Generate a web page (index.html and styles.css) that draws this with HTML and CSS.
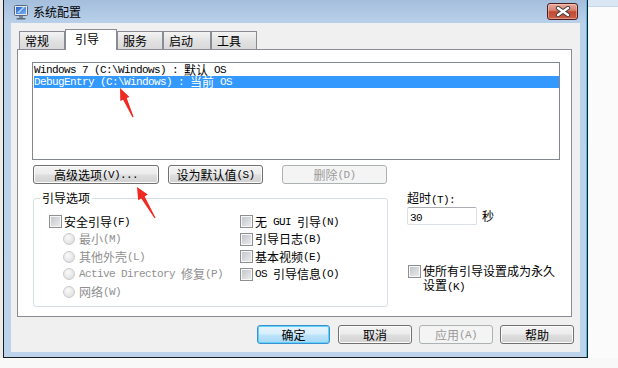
FILE: index.html
```html
<!DOCTYPE html>
<html lang="zh-CN">
<head>
<meta charset="utf-8">
<title>系统配置</title>
<link rel="stylesheet" href="styles.css">
</head>
<body>
<div class="desk">
  <div class="desk-left"></div>
  <div class="window">
    <div class="titlebar">
      <svg class="app-icon" width="14" height="15" viewBox="0 0 14 15">
        <defs>
          <linearGradient id="scr" x1="0" y1="0" x2="1" y2="1">
            <stop offset="0" stop-color="#2a62c6"/>
            <stop offset="1" stop-color="#74b2f2"/>
          </linearGradient>
        </defs>
        <rect x="0.5" y="0.5" width="13" height="10" rx="1" fill="#e4e8ee" stroke="#56677e"/>
        <rect x="2" y="2" width="10" height="7" fill="url(#scr)"/>
        <path d="M3 8 L9 2 L11 2 L5 8 Z" fill="#cfe8ff" opacity="0.8"/>
        <rect x="5" y="11" width="4" height="2" fill="#7d8794"/>
        <rect x="2.5" y="13" width="9" height="1.6" rx="0.5" fill="#5f6a78"/>
      </svg>
      <span class="title">系统配置</span>
      <div class="close">
        <svg width="16" height="11" viewBox="0 0 16 11">
          <path d="M3 2 L13 9 M13 2 L3 9" stroke="#3b3b3b" stroke-width="4.2" stroke-linecap="round"/>
          <path d="M3 2 L13 9 M13 2 L3 9" stroke="#ffffff" stroke-width="2.4" stroke-linecap="round"/>
        </svg>
      </div>
    </div>
    <div class="client">
      <div class="tabs">
        <div class="tab">常规</div>
        <div class="tab active">引导</div>
        <div class="tab">服务</div>
        <div class="tab wide">启动</div>
        <div class="tab">工具</div>
      </div>
      <div class="panel">
        <div class="listbox">
          <div class="item"><span class="a">Windows 7 (C:\Windows) : </span><span class="cj">默认</span><span class="a"> OS</span></div>
          <div class="item sel"><span class="a">DebugEntry (C:\Windows) : </span><span class="cj">当前</span><span class="a"> OS</span></div>
        </div>
        <div class="btnrow">
          <div class="btn b-adv">高级选项<span class="a">(V)...</span></div>
          <div class="btn b-def">设为默认值<span class="a">(S)</span></div>
          <div class="btn b-del disabled">删除<span class="a">(D)</span></div>
        </div>
        <div class="lower">
          <div class="group">
            <span class="group-label">引导选项</span>
            <div class="gcol1">
              <div class="row"><span class="cb"></span>安全引导<span class="a">(F)</span></div>
              <div class="row ind dis"><span class="radio"></span>最小<span class="a">(M)</span></div>
              <div class="row ind dis"><span class="radio"></span>其他外壳<span class="a">(L)</span></div>
              <div class="row ind dis"><span class="radio"></span><span class="a">Active Directory </span>修复<span class="a">(P)</span></div>
              <div class="row ind dis"><span class="radio"></span>网络<span class="a">(W)</span></div>
            </div>
            <div class="gcol2">
              <div class="row"><span class="cb"></span>无<span class="a"> GUI </span>引导<span class="a">(N)</span></div>
              <div class="row"><span class="cb"></span>引导日志<span class="a">(B)</span></div>
              <div class="row"><span class="cb"></span>基本视频<span class="a">(E)</span></div>
              <div class="row"><span class="cb"></span><span class="a">OS </span>引导信息<span class="a">(O)</span></div>
            </div>
          </div>
          <div class="side">
            <div class="side-label">超时<span class="a">(T):</span></div>
            <div class="timeout">
              <div class="input"><span class="a">30</span></div>
              <span class="unit">秒</span>
            </div>
            <div class="perm">
              <span class="cb"></span>
              <div class="perm-text">
                <span class="pline">使所有引导设置成为永久</span>
                <span class="pline">设置<span class="a">(K)</span></span>
              </div>
            </div>
          </div>
        </div>
      </div>
      <div class="footer">
        <div class="btn fbtn default ok">确定</div>
        <div class="btn fbtn">取消</div>
        <div class="btn fbtn disabled">应用<span class="a">(A)</span></div>
        <div class="btn fbtn">帮助</div>
      </div>
    </div>
  </div>
  <div class="desk-right"></div>
</div>
<svg class="arrows" width="618" height="368" viewBox="0 0 618 368">
  <polygon points="120,88 129.5,96.9 126.7,98.1 133.6,116.8 132.4,117.2 123.1,99.7 120.3,100.9" fill="#ee2a22"/>
  <polygon points="137,187 147.8,194.6 144.7,196.4 155.5,217.8 154.5,218.2 141.3,198.4 138.2,200.2" fill="#ee2a22"/>
</svg>
</body>
</html>
```
FILE: styles.css
```css
* {
  box-sizing: border-box;
}

html, body {
  margin: 0;
  padding: 0;
}

body {
  width: 618px;
  height: 368px;
  overflow: hidden;
  position: relative;
  background: #f8f8f8;
  font-family: "Noto Sans CJK SC", "Noto Sans", sans-serif;
  font-size: 12px;
  line-height: 14px;
  color: #000;
}

.a {
  font-family: "Liberation Mono", "DejaVu Sans Mono", monospace;
  font-size: 11px;
  letter-spacing: -0.6px;
  white-space: pre;
}

.desk {
  display: flex;
  height: 358px;
}

.desk-left {
  width: 3px;
  background: #ececec;
}

.desk-right {
  width: 30px;
  background: linear-gradient(#dbe6f4 0, #dbe6f4 6px, #c7d6e8 6px, #c7d6e8 7px, #fbfbfb 7px);
}

.window {
  width: 585px;
  height: 358px;
  border: 1px solid #1c1c1c;
  border-top: none;
  background: linear-gradient(180deg, #a4bedc 0px, #bad1ea 24px, #bcd3eb 100%);
  box-shadow: inset -1px 0 0 #38c4ee;
  display: flex;
  flex-direction: column;
}

.titlebar {
  height: 23px;
  display: flex;
  align-items: center;
  padding-left: 10px;
}

.app-icon {
  flex: none;
  margin-top: 1px;
}

.title {
  margin-left: 5px;
  font-size: 12px;
  color: #000;
}

.close {
  margin-left: auto;
  margin-right: 9px;
  align-self: flex-start;
  margin-top: 3px;
  width: 31px;
  height: 17px;
  border: 1px solid #4a1f22;
  border-radius: 3px;
  background: linear-gradient(180deg, #e8aa9c 0%, #d88272 42%, #c24a33 52%, #cc5e45 100%);
  box-shadow: inset 0 0 0 1px rgba(255, 220, 210, 0.45);
  display: flex;
  align-items: center;
  justify-content: center;
}

.client {
  flex: 1;
  margin: 0 7px 5px;
  background: #f0f0f0;
  padding: 6px 6px 0 6px;
}

.tabs {
  display: flex;
  align-items: flex-end;
  height: 20px;
  padding-left: 2px;
}

.tab {
  width: 46px;
  height: 18px;
  border: 1px solid #898c95;
  border-bottom: none;
  background: linear-gradient(180deg, #f3f3f3, #e1e1e1 55%, #d9d9d9);
  padding-left: 5px;
  line-height: 17px;
}

.tab.wide {
  width: 48px;
}

.tab.active {
  width: 52px;
  height: 21px;
  margin-bottom: -1px;
  background: #fff;
  position: relative;
  z-index: 1;
  padding-left: 9px;
}

.panel {
  height: 268px;
  margin-right: 2px;
  border: 1px solid #898c95;
  background: #fff;
}

.listbox {
  margin: 12px 0 0 14px;
  width: 528px;
  height: 98px;
  border: 1px solid #828790;
  background: #fff;
  padding: 1px 0 0 1px;
}

.item {
  display: flex;
  align-items: center;
  height: 12px;
  line-height: 12px;
  white-space: nowrap;
}

.item .a {
  line-height: 12px;
}

.cj {
  display: inline-block;
  font-size: 12px;
  height: 12px;
  line-height: 12px;
}

.item.sel {
  background: #3399ff;
  color: #fff;
}

.btnrow {
  display: flex;
  margin: 5px 0 0 15px;
}

.btn {
  height: 19px;
  border: 1px solid #707070;
  border-radius: 3px;
  background: linear-gradient(180deg, #f3f3f3 0%, #ececec 48%, #dedede 52%, #d2d2d2 100%);
  box-shadow: inset 0 0 0 1px #fbfbfb;
  display: flex;
  align-items: center;
  justify-content: center;
  white-space: nowrap;
  line-height: 14px;
}

.btn.disabled {
  border-color: #adb2b5;
  background: #f4f4f4;
  box-shadow: none;
  color: #9a9a9a;
}

.btn.default {
  border-color: #3c8fd1;
  background: linear-gradient(180deg, #e6f4fc 0%, #d6eefb 48%, #bde4fa 52%, #a6d8f4 100%);
  box-shadow: inset 0 0 0 1px #5fd2f8;
}

.b-adv {
  width: 126px;
}

.b-def {
  width: 95px;
  margin-left: 9px;
}

.b-del {
  width: 105px;
  margin-left: 19px;
}

.lower {
  display: flex;
  align-items: flex-start;
  margin-top: 7px;
}

.group {
  position: relative;
  margin: 7px 0 0 15px;
  width: 355px;
  height: 109px;
  border: 1px solid #d5dfe5;
  border-radius: 3px;
  display: flex;
  padding: 14px 0 0 15px;
}

.group-label {
  position: absolute;
  top: -8px;
  left: 6px;
  padding: 0 2px;
  background: #fff;
  line-height: 14px;
}

.gcol1 {
  width: 191px;
}

.row {
  height: 17.5px;
  display: flex;
  align-items: center;
  white-space: nowrap;
}

.row.ind {
  padding-left: 14px;
}

.row.dis {
  color: #8f8f8f;
}

.cb {
  display: inline-block;
  flex: none;
  width: 13px;
  height: 13px;
  margin-right: 2px;
  border: 1px solid #8e8f8f;
  background: linear-gradient(135deg, #bfc3c8, #eeeeef);
  box-shadow: inset 0 0 0 1px #f7f7f7;
}

.radio {
  display: inline-block;
  flex: none;
  width: 12px;
  height: 12px;
  margin-right: 4px;
  border-radius: 50%;
  border: 1px solid #cbcbcb;
  background: radial-gradient(circle at 40% 35%, #fafafa 0%, #e6e6e6 60%, #d6d6d6 100%);
}

.side {
  margin-left: 19px;
}

.side-label {
  height: 14px;
}

.timeout {
  display: flex;
  align-items: center;
  margin-top: 2px;
}

.input {
  width: 70px;
  height: 18px;
  border: 1px solid #dbdfe6;
  border-top-color: #abadb3;
  border-radius: 2px;
  background: #fff;
  padding-left: 2px;
  line-height: 16px;
}

.unit {
  margin-left: 5px;
}

.perm {
  display: flex;
  align-items: flex-start;
  margin-top: 39px;
}

.perm .cb {
  margin: 1px 2px 0 1px;
}

.perm-text {
  display: flex;
  flex-direction: column;
  width: 140px;
}

.pline {
  display: block;
  height: 14px;
  line-height: 14px;
  white-space: nowrap;
}

.footer {
  display: flex;
  justify-content: flex-end;
  gap: 7px;
  margin-top: 8px;
}

.fbtn {
  width: 74px;
}

.fbtn.ok {
  width: 73px;
  margin-right: 1px;
}

.arrows {
  position: absolute;
  left: 0;
  top: 0;
  pointer-events: none;
}
```
